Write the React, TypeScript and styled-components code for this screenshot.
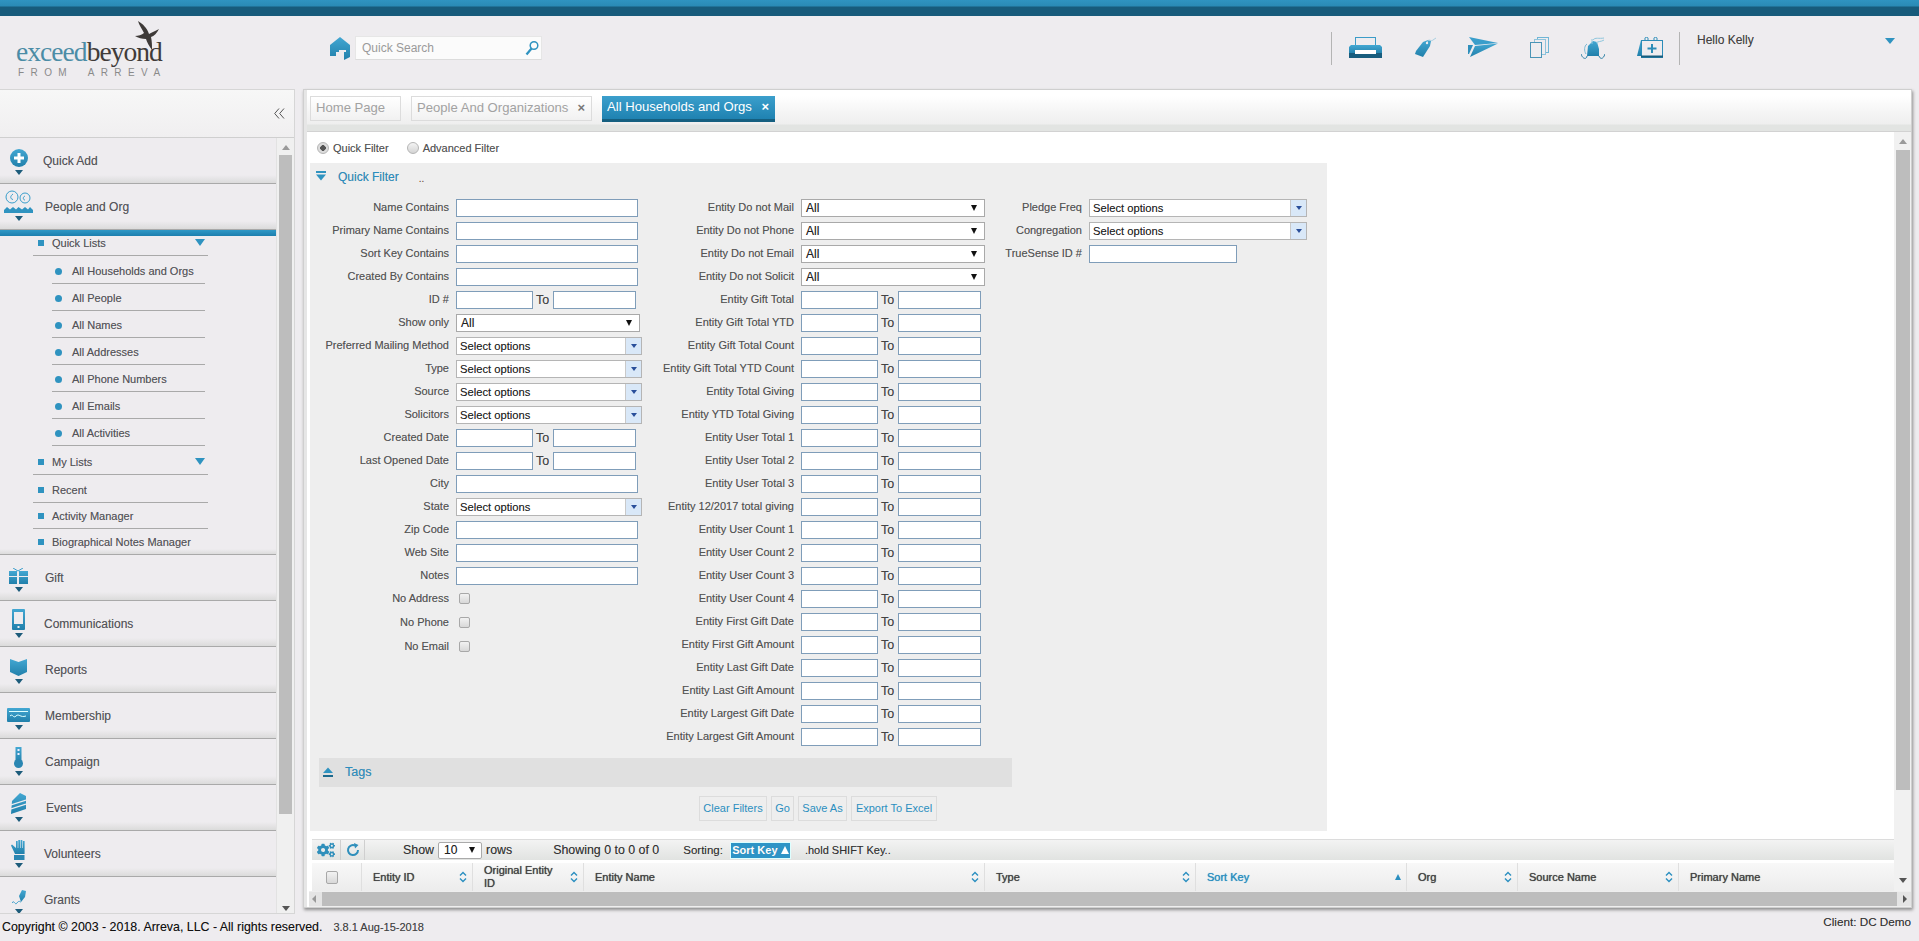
import React from 'react';
import styled, { createGlobalStyle } from 'styled-components';
import { FaCogs } from 'react-icons/fa';

const Global = createGlobalStyle`
  html, body { margin: 0; padding: 0; background: #eeecef; }
  body { font-family: "Liberation Sans", Arial, sans-serif; font-size: 12px; color: #555; overflow: hidden; text-shadow: 0 0 .6px rgba(70,70,70,.45); }
  * { box-sizing: border-box; }
`;

const Page = styled.div`width: 1919px; height: 941px; overflow: hidden; display: flex; flex-direction: column; background: #eeecef; position: relative;`;
const TopBar = styled.div`height: 16px; flex: none; background: linear-gradient(#2f93c0 0, #2a8ab5 6px, #175b7b 7px, #175b7b 100%);`;
const Header = styled.header`height: 73px; flex: none; display: flex; align-items: flex-start;`;
const Logo = styled.div`width: 314px; margin-left: 16px; padding-top: 21px; position: relative; flex: none;`;
const LogoWord = styled.div`font-family: "Liberation Serif", serif; font-size: 27.5px; line-height: 30px; letter-spacing: -.95px; color: #4b8ca6; white-space: nowrap; text-shadow: none;`;
const LogoDark = styled.span`color: #403b39;`;
const LogoSub = styled.div`font-size: 10px; line-height: 12px; letter-spacing: 6.4px; word-spacing: 6px; color: #8a8a8a; margin: 0 0 0 2px; white-space: nowrap; text-shadow: none;`;
const BirdMark = styled.svg`position: absolute; left: 119px; top: 5px;`;
const HomeMark = styled.svg`flex: none; margin: 21px 5px 0 0;`;
const SearchBox = styled.div`width: 187px; height: 24px; margin-top: 20px; background: #fbfbfb; border: 1px solid #e6e6e6; border-bottom-color: #dcdcdc; display: flex; align-items: center; padding: 0 1px 0 4px;`;
const SearchInput = styled.input`flex: 1; min-width: 0; border: 0; background: transparent; outline: 0; font: 12px "Liberation Sans", Arial, sans-serif; color: #888; &::placeholder { color: #9a9a9a; opacity: 1; }`;
const Tools = styled.div`margin-left: auto; width: 588px; height: 33px; margin-top: 16px; display: flex; align-items: flex-start;`;
const ToolGroup = styled.div`display: flex; gap: 32px; height: 33px; align-items: flex-start; padding: 5px 16px 0 17px; border-left: 1px solid #b4b4b4; border-right: 1px solid #b4b4b4;`;
const Hello = styled.div`padding: 0 0 0 17px; flex: 1; color: #444; font-size: 12px; line-height: 16px;`;
const HelloCaret = styled.div`width: 0; height: 0; margin: 6px 24px 0 0; border-left: 5px solid transparent; border-right: 5px solid transparent; border-top: 6px solid #2f93c0;`;

const Body = styled.div`height: 825px; flex: none; display: flex; align-items: flex-start;`;
const Side = styled.aside`width: 295px; height: 825px; flex: none; border: 1px solid #d6d6d6; border-left: 0; display: flex; flex-direction: column; background: #eeecef;`;
const SideHead = styled.div`height: 48px; flex: none; background: linear-gradient(#f7f7f7, #f0eff0); display: flex; justify-content: flex-end; align-items: center; padding: 0 9px 0 0; border-bottom: 1px solid #cfcfcf;`;
const SideBody = styled.div`flex: 1; min-height: 0; display: flex;`;
const NavCol = styled.nav`width: 277px; flex: none; overflow: hidden; border-right: 1px solid #e2e2e2;`;
const VScrollSide = styled.div`width: 17px; flex: none; background: #f0f0f0; display: flex; flex-direction: column; align-items: center; padding-top: 7px;`;
const ArrowUp = styled.div`width: 0; height: 0; flex: none; border-left: 4px solid transparent; border-right: 4px solid transparent; border-bottom: 5px solid #9a9a9a;`;
const ArrowDown = styled.div`width: 0; height: 0; flex: none; border-left: 4px solid transparent; border-right: 4px solid transparent; border-top: 5px solid #555;`;
const ArrowLeft = styled.div`width: 0; height: 0; border-top: 4px solid transparent; border-bottom: 4px solid transparent; border-right: 4px solid #999;`;
const ArrowRight = styled.div`width: 0; height: 0; border-top: 4px solid transparent; border-bottom: 4px solid transparent; border-left: 4px solid #555;`;
const SideThumb = styled.div`width: 13px; height: 659px; flex: none; margin: 5px 0 92px; background: #bdbdbd;`;

const NavRow = styled.div`height: 46px; display: flex; align-items: stretch; background: linear-gradient(#eeecef 0, #eeecef 37px, #dbdbdb 45px); border-bottom: 1px solid #a9a9a9; overflow: hidden;`;
const NavIconCol = styled.div`width: 37px; flex: none; display: flex; flex-direction: column; align-items: center; justify-content: flex-end; padding-bottom: 8px; gap: 3px;`;
const NavTri = styled.div`width: 0; height: 0; border-left: 4px solid transparent; border-right: 4px solid transparent; border-top: 5px solid #1d5c7b; flex: none;`;
const NavLabel = styled.div<{ $left: number }>`margin-left: ${p => p.$left}px; align-self: center; font-size: 12px; color: #55555a;`;
const NavActiveBar = styled.div`height: 6px; background: linear-gradient(#2f98c6, #1c7fae);`;
const SubList = styled.div`height: 313px; overflow: hidden;`;
const NavShade = styled.div`height: 6px; background: linear-gradient(#eeecef, #dcdcdc); border-bottom: 1px solid #a9a9a9;`;
const TopItem = styled.div<{ $h: number; $pt: number; $noline?: boolean }>`height: ${p => p.$h}px; padding: ${p => p.$pt}px 3px 0 5px; margin-left: 33px; width: 175px; display: flex; align-items: flex-start; font-size: 11px; line-height: 14px; color: #55555a; border-bottom: ${p => p.$noline ? '0' : '1px solid #a9a9a9'};`;
const Square = styled.span`width: 6px; height: 6px; background: #2f93c0; margin: 4px 8px 0 0; flex: none;`;
const SubItem = styled.div<{ $h: number; $pt: number }>`height: ${p => p.$h}px; padding: ${p => p.$pt}px 0 0 3px; margin-left: 52px; width: 153px; display: flex; align-items: flex-start; font-size: 11px; line-height: 14px; color: #55555a; border-bottom: 1px solid #a9a9a9;`;
const Dot = styled.span`width: 7px; height: 7px; border-radius: 50%; background: #2f93c0; margin: 4px 10px 0 0; flex: none;`;
const ItemCaret = styled.span`width: 0; height: 0; margin: 3px 0 0 auto; border-left: 5px solid transparent; border-right: 5px solid transparent; border-top: 7px solid #2f93c0;`;

const Main = styled.main`width: 1609px; height: 819px; margin-left: 8px; flex: none; background: #fff; border: 1px solid #cfcfcf; box-shadow: 1px 2px 3px #8f8f8f, inset 3px 0 0 #e6e6e6; display: flex; flex-direction: column; padding-left: 3px;`;
const TabBar = styled.div`height: 42px; flex: none; padding: 6px 0 0 3px; display: flex; gap: 10px; align-items: flex-start; background: linear-gradient(#fff 0, #fff 6px, #f5f5f5 22px, #efefef 34px, #e2e4e2 35px, #e2e4e2 41px); border-bottom: 1px solid #d2d2d2;`;
const Tab = styled.div<{ $w: number; $active?: boolean }>`width: ${p => p.$w}px; height: ${p => p.$active ? 26 : 25}px; display: flex; align-items: flex-start; padding: 3px 6px 0 5px; font-size: 13.1px; line-height: 16px; white-space: nowrap; text-shadow: none; color: ${p => p.$active ? '#fff' : '#a2a2a2'}; background: ${p => p.$active ? 'linear-gradient(#3b9fcc, #1f82b1)' : 'linear-gradient(#fff, #f1f1f1)'}; border: ${p => p.$active ? '0' : '1px solid #dcdcdc'}; border-bottom: ${p => p.$active ? '3px solid #155f80' : '1px solid #dcdcdc'};`;
const TabClose = styled.span<{ $active?: boolean }>`margin-left: auto; font-weight: bold; font-size: 13px; color: ${p => p.$active ? '#fff' : '#777'};`;

const ContentRow = styled.div`height: 759px; flex: none; display: flex;`;
const Scroller = styled.div`flex: 1; min-width: 0; overflow: hidden; padding-left: 2px;`;
const VScroll = styled.div`width: 17px; flex: none; background: #f1f1f1; display: flex; flex-direction: column; align-items: center; padding-top: 7px;`;
const MainThumb = styled.div`width: 14px; height: 640px; flex: none; margin: 6px 0 88px; background: #bdbdbd;`;
const HScroll = styled.div`height: 16px; flex: none; margin-left: 2px; background: #e4e4e4; display: flex; align-items: center; padding: 0 4px 0 3px; gap: 6px; border-top: 1px solid #eee; border-bottom: 1px solid #eee;`;
const HThumb = styled.div`flex: 1; height: 14px; background: #bdbdbd;`;

const RadioRow = styled.div`height: 31px; display: flex; align-items: center; padding-left: 8px;`;
const Radio = styled.span<{ $on?: boolean }>`width: 12px; height: 12px; border-radius: 50%; flex: none; margin-right: 4px; border: 1px solid #b5b5b5; background: ${p => p.$on ? 'radial-gradient(circle, #555 0, #555 2.6px, #dcdcdc 3px)' : 'linear-gradient(#f4f4f4, #d4d4d4)'};`;
const RadioLabel = styled.span<{ $mr?: number }>`font-size: 11px; color: #555; margin-right: ${p => p.$mr || 0}px;`;

const Filter = styled.section`width: 1017px; height: 668px; margin-left: 1px; background: #eee;`;
const FilterHead = styled.div`height: 36px; display: flex; align-items: flex-start; padding: 7px 0 0 6px;`;
const HeadIconBar = styled.svg`flex: none; margin: 1px 12px 0 0;`;
const FilterTitle = styled.div`font-size: 12px; line-height: 15px; color: #2b8fc0;`;
const Dots = styled.div`margin: 3px 0 0 20px; color: #7a5a40; font-size: 10px;`;
const FormCols = styled.div`display: flex; height: 552px;`;
const Col = styled.div<{ $w: number }>`width: ${p => p.$w}px; flex: none;`;
const Row = styled.div<{ $lw: number; $h?: number }>`height: ${p => p.$h || 23}px; display: grid; grid-template-columns: ${p => p.$lw}px 1fr; column-gap: 7px; align-items: start;`;
const Label = styled.label`text-align: right; font-size: 11px; line-height: 16px; color: #555; white-space: nowrap;`;
const TextInput = styled.input<{ $w: number }>`display: block; width: ${p => p.$w}px; height: 18px; border: 1px solid #7f9db9; background: #fff; padding: 0 2px; outline: 0;`;
const Pair = styled.div`display: flex; align-items: flex-start;`;
const To = styled.span`font-size: 12.5px; line-height: 18px; color: #444; width: 20px; text-align: left; padding-left: 3px;`;
const SelectBox = styled.div<{ $w: number }>`width: ${p => p.$w}px; height: 18px; border: 1px solid #a9a9a9; background: #fff; display: flex; align-items: center; padding: 0 7px 0 4px; font-size: 12px; color: #222; justify-content: space-between;`;
const SelectCaret = styled.span`width: 0; height: 0; border-left: 3px solid transparent; border-right: 3px solid transparent; border-top: 6px solid #111;`;
const MultiBox = styled.div<{ $w: number }>`width: ${p => p.$w}px; height: 18px; border: 1px solid #b5b5b5; background: #fff; display: flex; align-items: center; font-size: 11.2px; color: #222;`;
const MultiText = styled.span`flex: 1; padding-left: 3px;`;
const MultiBtn = styled.span`width: 16px; height: 16px; background: #d9e8f8; border-left: 1px solid #c9c9c9; display: flex; align-items: center; justify-content: center;`;
const MultiTri = styled.span`width: 0; height: 0; border-left: 3.5px solid transparent; border-right: 3.5px solid transparent; border-top: 4px solid #2a4f9a;`;
const Check = styled.span`display: block; width: 11px; height: 11px; margin: 3px 0 0 3px; border: 1px solid #a8a8a8; border-radius: 2px; background: linear-gradient(#f2f2f2, #d8d8d8);`;

const TagsBar = styled.div`margin: 7px 0 0 9px; width: 693px; height: 29px; background: #e0e0e0; display: flex; align-items: center; padding: 0 0 2px 4px;`;
const TagsTitle = styled.div`margin-left: 12px; font-size: 12.5px; color: #2b8fc0;`;
const Buttons = styled.div`display: flex; gap: 4px; margin: 9px 0 0 389px;`;
const FBtn = styled.button<{ $w: number }>`width: ${p => p.$w}px; height: 25px; padding: 0 0 1px; border: 1px solid #dcdcdc; background: #eee; color: #2b8fc0; font: 11px "Liberation Sans", Arial, sans-serif; white-space: nowrap;`;

const GridBar = styled.div`margin: 8px 0 0 3px; height: 21px; width: 1583px; display: flex; align-items: center; background: linear-gradient(#f3f3f3, #e1e3e1); border-top: 1px solid #dcdcdc;`;
const GridIconBtn = styled.div<{ $w: number }>`width: ${p => p.$w}px; height: 20px; flex: none; display: flex; align-items: center; justify-content: center; color: #2f8fbb; border-right: 1px solid #cfcfcf;`;
const GridText = styled.span<{ $ml: number; $s?: number }>`margin-left: ${p => p.$ml}px; font-size: ${p => p.$s || 12.4}px; color: #333; white-space: nowrap;`;
const RowsSelect = styled.div`margin-left: 4px; width: 44px; height: 17px; background: #fff; border: 1px solid #aaa; border-radius: 2px; display: flex; align-items: center; justify-content: space-between; padding: 0 6px 0 5px; font-size: 12px; color: #222;`;
const SortPill = styled.div`margin-left: 7px; width: 61px; height: 17px; background: #2e94c6; color: #fff; font-weight: bold; font-size: 11px; display: flex; align-items: center; justify-content: center; gap: 3px; border: 1px solid #dff; white-space: nowrap;`;
const PillTri = styled.span`width: 0; height: 0; border-left: 4px solid transparent; border-right: 4px solid transparent; border-bottom: 8px solid #fff;`;
const GridHead = styled.div`margin: 3px 0 0 3px; height: 28px; width: 1583px; display: flex; background: linear-gradient(#f8f8f8, #ececec);`;
const HeadCell = styled.div<{ $w: number; $active?: boolean }>`width: ${p => p.$w}px; flex: none; display: flex; align-items: center; padding: 0 5px 0 11px; font-size: 11px; line-height: 13px; color: ${p => p.$active ? '#2b8fc0' : '#444'}; border-right: 1px solid #dfdfdf; &:last-child { border-right: 0; }`;
const HeadText = styled.span`flex: 1; text-shadow: 0 0 .7px currentColor;`;
const GridCheck = styled.span`display: block; width: 12px; height: 13px; margin-left: 3px; border: 1px solid #a8a8a8; border-radius: 2px; background: linear-gradient(#f2f2f2, #d8d8d8);`;
const SortTriUp = styled.span`width: 0; height: 0; border-left: 3.5px solid transparent; border-right: 3.5px solid transparent; border-bottom: 6px solid #2b8fc0;`;

const Footer = styled.footer`height: 27px; flex: none; display: flex; align-items: flex-start;`;
const Copy = styled.div`margin: 5px 0 0 2px; font-size: 12.4px; line-height: 16px; color: #111;`;
const Version = styled.div`margin: 5px 0 0 11px; font-size: 11px; line-height: 16px; color: #444;`;
const Client = styled.div`margin: 0 8px 0 auto; font-size: 11.7px; line-height: 16px; color: #333;`;
const Defs = styled.svg`position: absolute; width: 0; height: 0;`;
const MagMark = styled.svg`flex: none; margin-right: 1px;`;

const B = 'url(#blueGrad)';
const Bird = () => (
  <BirdMark width="27" height="29" viewBox="0 0 27 29"><path fill="#3e3a38" d="M3 0 C8 3 12 7 14 13 C17 11 21 10 24 8 C22 12 19 15 16 16 C17 20 17 25 17 29 C14 25 12 21 11 18 C7 18 3 17 0 15 C3 15 7 14 9 12 C7 8 4 4 3 0 Z" /></BirdMark>
);
const Home = () => (
  <HomeMark width="20" height="24" viewBox="0 0 20 24"><path fill={B} d="M10 0 L20 8 V20 L14 23 V15 H6 V19 H0 V8 Z" /><path fill="#eeecef" d="M9 13 H16 V15 H11 V20 H9 Z" /></HomeMark>
);
const Mag = () => (
  <MagMark width="14" height="16" viewBox="0 0 14 16" fill="none" stroke="#2f93c0"><circle cx="9" cy="5.5" r="3.8" strokeWidth="1.5" /><path d="M6.5 8.5 L1.5 14.5" strokeWidth="2.2" /></MagMark>
);
const Collapse = () => (
  <svg width="11" height="11" viewBox="0 0 11 11" fill="none" stroke="#555"><path d="M5 .5 L.7 5.5 L5 10.5 M10 .5 L5.7 5.5 L10 10.5" /></svg>
);
const Printer = () => (
  <svg width="33" height="21" viewBox="0 0 33 21"><rect x="6.5" y=".5" width="20" height="8" fill="none" stroke="#3b9cc8" /><path fill={B} d="M2 8 H31 L33 10 V17 H0 V10 Z" /><rect y="16" width="33" height="5" fill="#185d7e" /><rect x="6" y="13" width="21" height="4" fill="#fff" /></svg>
);
const TagIcon = () => (
  <svg width="22" height="21" viewBox="0 0 22 21"><path fill={B} d="M9 5 L14 3 L17 4 L16 9 L9 20 L1 17 L2 14 Z" /><circle cx="13" cy="6" r="1.2" fill="#eeecef" /><path d="M13 5 C15 1 17 5 19 3 L22 1" stroke="#a9cfe0" fill="none" /></svg>
);
const Plane = () => (
  <svg width="30" height="20" viewBox="0 0 30 20"><path fill="#3a9ecb" d="M1 0 L30 6 L7 8 Z" /><path fill={B} d="M30 6.5 L2 20 L7 9 Z" /><path fill="#2f8fbb" d="M0 8 H5 L1 17 H0 Z" /></svg>
);
const CopyIcon = () => (
  <svg width="19" height="21" viewBox="0 0 19 21" fill="none"><rect x="7.5" y=".5" width="11" height="15" stroke="#6fb6d6" /><rect x="4.5" y="2.5" width="11" height="15" stroke="#8fc4dc" fill="#eeecef" /><rect x=".5" y="5.5" width="11" height="15" stroke="#4a94b6" fill="#eeecef" /></svg>
);
const Bell = () => (
  <svg width="24" height="23" viewBox="0 0 24 23" fill="none"><path d="M6 7 C3 9 3 14 5 17" stroke="#7cb9d4" /><path fill={B} d="M7 9 L12 4 L16 5 L18 12 L18 19 H6 Z" /><path d="M0 17 C2 23 6 22 6 19 M18 19 C19 22 22 23 24 17" stroke="#2a7ea4" /><path d="M12 3 C14 0 18 2 23 1 M15 6 C17 4 20 5 23 3 M11 2 L11 7" stroke="#8fc6dd" /></svg>
);
const Cal = () => (
  <svg width="26" height="21" viewBox="0 0 26 21"><path fill={B} d="M4 3 H10 V19 H0 Z" /><rect x="4.5" y="3.5" width="21" height="17" fill="#eeecef" stroke="#2b8cb8" /><rect x="4" y="18.5" width="22" height="2" fill="#185d7e" /><path d="M8 4 V1 C8 0 11 0 11 1 V4 M17 4 V1 C17 0 20 0 20 1 V4" stroke="#2b8cb8" fill="none" /><path d="M15 7 V16 M10.5 11.5 H19.5" stroke="#2b8cb8" strokeWidth="2" /></svg>
);
const NIPlus = () => (<svg width="18" height="18" viewBox="0 0 18 18"><circle cx="9" cy="9" r="9" fill={B} /><path d="M9 4 V14 M4 9 H14" stroke="#fff" strokeWidth="3" /></svg>);
const NIPeople = () => (
  <svg width="29" height="23" viewBox="0 0 29 23" fill="none"><circle cx="8" cy="7" r="6" stroke="#3a9ecb" /><circle cx="21" cy="8" r="5" stroke="#3a9ecb" /><path d="M9 4 C6 6 6 9 9 9.5 M21 6 C18.5 7 19 10 21 10" stroke="#3a9ecb" /><path fill="#2f93c0" d="M0 23 V20 L3 17 L6 19.5 L9 17 L12 19.5 L14.5 17 L18 19.5 L21 17 L24 19.5 L26 17 L29 20 V23 Z" /></svg>
);
const NIGift = () => (<svg width="19" height="16" viewBox="0 0 19 16"><path fill={B} d="M0 3 H8 V8 H0 Z M10 3 H19 V8 H10 Z M0 9 H8 V16 H0 Z M10 9 H19 V16 H10 Z" /><path d="M9 3 L4 0 M9 3 L14 0" stroke="#3a9ecb" /></svg>);
const NIPhone = () => (<svg width="13" height="21" viewBox="0 0 13 21"><rect width="13" height="21" rx="1" fill={B} /><rect x="2" y="3" width="9" height="12" fill="#eeecef" /><rect x="5.5" y="17" width="2" height="2" fill="#eeecef" /></svg>);
const NIBook = () => (<svg width="17" height="17" viewBox="0 0 17 17"><path fill={B} d="M0 0 L8.5 3 L17 0 V13 L8.5 17 L0 13 Z" /></svg>);
const NICard = () => (<svg width="23" height="14" viewBox="0 0 23 14"><rect width="23" height="14" rx="1" fill={B} /><rect x="2" y="3" width="19" height="1" fill="#dff" /><path d="M3 8 C6 5 6 11 9 8 S13 10 19 8" stroke="#dff" fill="none" /></svg>);
const NITherm = () => (<svg width="9" height="21" viewBox="0 0 9 21"><rect x="1.5" width="6" height="16" fill={B} /><circle cx="4.5" cy="16.5" r="4.5" fill="#2a86b2" /><rect x="3.5" y="2" width="2" height="2" fill="#eef" /><rect x="3.5" y="6" width="2" height="2" fill="#eef" /></svg>);
const NICake = () => (<svg width="15" height="21" viewBox="0 0 15 21"><path fill={B} d="M1 8 L9 0 L15 3 V16 L0 21 Z" /><path d="M0 12 L15 7 M0 16 L15 11" stroke="#eeecef" strokeWidth="1.3" /></svg>);
const NIHand = () => (<svg width="15" height="20" viewBox="0 0 15 20"><path fill={B} d="M5 1 H6.7 V8 H5 Z M7.3 0 H9 V8 H7.3 Z M9.6 0 H11.3 V8 H9.6 Z M11.9 1 H13.6 V8 H11.9 Z M5 8 H13.6 V14 H4 L0 5.5 L1 4.5 L5 8 Z" /><rect x="3" y="15" width="10.5" height="5" fill="#2a86b2" /></svg>);
const NIPen = () => (<svg width="14" height="16" viewBox="0 0 14 16" fill="none"><path fill={B} d="M10 0 L14 1 L13 7 L9 12 L7 6 Z" /><path d="M0 13 C2 9 3 16 5 13 S8 12 9 12" stroke="#3a9ecb" /></svg>);

const NavItem = ({ icon, label, left }: { icon: React.ReactNode; label: string; left: number }) => (
  <NavRow><NavIconCol>{icon}<NavTri /></NavIconCol><NavLabel $left={left}>{label}</NavLabel></NavRow>
);

const Txt = ({ w }: { w: number }) => <TextInput $w={w} />;
const Range = ({ a, b }: { a: number; b: number }) => <Pair><TextInput $w={a} /><To>To</To><TextInput $w={b} /></Pair>;
const Sel = ({ w }: { w: number }) => <SelectBox $w={w}>All<SelectCaret /></SelectBox>;
const Multi = ({ w }: { w: number }) => <MultiBox $w={w}><MultiText>Select options</MultiText><MultiBtn><MultiTri /></MultiBtn></MultiBox>;

const col1: [string, React.ReactNode, number?][] = [
  ['Name Contains', <Txt w={182} />], ['Primary Name Contains', <Txt w={182} />], ['Sort Key Contains', <Txt w={182} />], ['Created By Contains', <Txt w={182} />],
  ['ID #', <Range a={77} b={83} />], ['Show only', <Sel w={184} />], ['Preferred Mailing Method', <Multi w={186} />], ['Type', <Multi w={186} />], ['Source', <Multi w={186} />], ['Solicitors', <Multi w={186} />],
  ['Created Date', <Range a={77} b={83} />], ['Last Opened Date', <Range a={77} b={83} />], ['City', <Txt w={182} />], ['State', <Multi w={186} />], ['Zip Code', <Txt w={182} />], ['Web Site', <Txt w={182} />], ['Notes', <Txt w={182} />],
  ['No Address', <Check />, 24], ['No Phone', <Check />, 24], ['No Email', <Check />, 24],
];
const col2Ranges = ['Entity Gift Total', 'Entity Gift Total YTD', 'Entity Gift Total Count', 'Entity Gift Total YTD Count', 'Entity Total Giving', 'Entity YTD Total Giving', 'Entity User Total 1', 'Entity User Total 2', 'Entity User Total 3', 'Entity 12/2017 total giving', 'Entity User Count 1', 'Entity User Count 2', 'Entity User Count 3', 'Entity User Count 4', 'Entity First Gift Date', 'Entity First Gift Amount', 'Entity Last Gift Date', 'Entity Last Gift Amount', 'Entity Largest Gift Date', 'Entity Largest Gift Amount'];
const updown = (
  <svg width="8" height="12" viewBox="0 0 8 12" fill="none" stroke="#2b8fc0" strokeWidth="1.4"><path d="M1 4.5 L4 1.5 L7 4.5 M1 7.5 L4 10.5 L7 7.5" /></svg>
);

export default function App() {
  return (
    <Page>
      <Global />
      <Defs><defs><linearGradient id="blueGrad" x1="0" y1="0" x2="0" y2="1"><stop offset="0" stopColor="#43a7d2" /><stop offset="1" stopColor="#2180ab" /></linearGradient></defs></Defs>
      <TopBar />
      <Header>
        <Logo>
          <Bird />
          <LogoWord>exceed<LogoDark>beyond</LogoDark></LogoWord>
          <LogoSub>FROM ARREVA</LogoSub>
        </Logo>
        <Home />
        <SearchBox><SearchInput placeholder="Quick Search" /><Mag /></SearchBox>
        <Tools>
          <ToolGroup><Printer /><TagIcon /><Plane /><CopyIcon /><Bell /><Cal /></ToolGroup>
          <Hello>Hello Kelly</Hello>
          <HelloCaret />
        </Tools>
      </Header>
      <Body>
        <Side>
          <SideHead><Collapse /></SideHead>
          <SideBody>
            <NavCol>
              <NavItem icon={<NIPlus />} label="Quick Add" left={6} />
              <NavItem icon={<NIPeople />} label="People and Org" left={8} />
              <NavActiveBar />
              <SubList>
                <TopItem $h={20} $pt={0}><Square />Quick Lists<ItemCaret /></TopItem>
                <SubItem $h={28} $pt={8}><Dot />All Households and Orgs</SubItem>
                <SubItem $h={27} $pt={7}><Dot />All People</SubItem>
                <SubItem $h={27} $pt={7}><Dot />All Names</SubItem>
                <SubItem $h={27} $pt={7}><Dot />All Addresses</SubItem>
                <SubItem $h={27} $pt={7}><Dot />All Phone Numbers</SubItem>
                <SubItem $h={27} $pt={7}><Dot />All Emails</SubItem>
                <SubItem $h={27} $pt={7}><Dot />All Activities</SubItem>
                <TopItem $h={29} $pt={9}><Square />My Lists<ItemCaret /></TopItem>
                <TopItem $h={28} $pt={8}><Square />Recent</TopItem>
                <TopItem $h={26} $pt={6}><Square />Activity Manager</TopItem>
                <TopItem $h={22} $pt={6} $noline><Square />Biographical Notes Manager</TopItem>
              </SubList>
              <NavShade />
              <NavItem icon={<NIGift />} label="Gift" left={8} />
              <NavItem icon={<NIPhone />} label="Communications" left={7} />
              <NavItem icon={<NIBook />} label="Reports" left={8} />
              <NavItem icon={<NICard />} label="Membership" left={8} />
              <NavItem icon={<NITherm />} label="Campaign" left={8} />
              <NavItem icon={<NICake />} label="Events" left={9} />
              <NavItem icon={<NIHand />} label="Volunteers" left={7} />
              <NavItem icon={<NIPen />} label="Grants" left={7} />
            </NavCol>
            <VScrollSide>
              <ArrowUp />
              <SideThumb />
              <ArrowDown />
            </VScrollSide>
          </SideBody>
        </Side>
        <Main>
          <TabBar>
            <Tab $w={91}>Home Page</Tab>
            <Tab $w={181}>People And Organizations<TabClose>×</TabClose></Tab>
            <Tab $w={173} $active>All Households and Orgs<TabClose $active>×</TabClose></Tab>
          </TabBar>
          <ContentRow>
            <Scroller>
              <RadioRow><Radio $on /><RadioLabel $mr={18}>Quick Filter</RadioLabel><Radio /><RadioLabel>Advanced Filter</RadioLabel></RadioRow>
              <Filter>
                <FilterHead>
                  <HeadIconBar width="10" height="10" viewBox="0 0 10 10"><rect width="10" height="2" fill="#2f93c0" /><path d="M0 3.5 H10 L5 9.5 Z" fill="#2f93c0" /></HeadIconBar>
                  <FilterTitle>Quick Filter</FilterTitle><Dots>..</Dots>
                </FilterHead>
                <FormCols>
                  <Col $w={340}>
                    {col1.map(([l, c, h]) => <Row key={l} $lw={139} $h={h}><Label>{l}</Label>{c}</Row>)}
                  </Col>
                  <Col $w={340}>
                    {['Entity Do not Mail', 'Entity Do not Phone', 'Entity Do not Email', 'Entity Do not Solicit'].map(l => <Row key={l} $lw={144}><Label>{l}</Label><Sel w={184} /></Row>)}
                    {col2Ranges.map(l => <Row key={l} $lw={144}><Label>{l}</Label><Range a={77} b={83} /></Row>)}
                  </Col>
                  <Col $w={310}>
                    <Row $lw={92}><Label>Pledge Freq</Label><Multi w={218} /></Row>
                    <Row $lw={92}><Label>Congregation</Label><Multi w={218} /></Row>
                    <Row $lw={92}><Label>TrueSense ID #</Label><Txt w={148} /></Row>
                  </Col>
                </FormCols>
                <TagsBar>
                  <svg width="10" height="10" viewBox="0 0 10 10"><path d="M0 6 H10 L5 0.5 Z" fill="#2f93c0" /><rect y="8" width="10" height="2" fill="#1d6a8e" /></svg>
                  <TagsTitle>Tags</TagsTitle>
                </TagsBar>
                <Buttons>
                  <FBtn $w={68}>Clear Filters</FBtn><FBtn $w={23}>Go</FBtn><FBtn $w={49}>Save As</FBtn><FBtn $w={86}>Export To Excel</FBtn>
                </Buttons>
              </Filter>
              <GridBar>
                <GridIconBtn $w={29}><FaCogs size={18} /></GridIconBtn>
                <GridIconBtn $w={24}><svg width="14" height="14" viewBox="0 0 14 14" fill="none" stroke="#2f8fbb" strokeWidth="2"><path d="M12 7 A5 5 0 1 1 9 2.5" /><path d="M8 0 L12.5 2 L9 5.5 Z" fill="#2f8fbb" strokeWidth="0" /></svg></GridIconBtn>
                <GridText $ml={38}>Show</GridText>
                <RowsSelect>10<SelectCaret /></RowsSelect>
                <GridText $ml={4}>rows</GridText>
                <GridText $ml={41}>Showing 0 to 0 of 0</GridText>
                <GridText $ml={24} $s={11.5}>Sorting:</GridText>
                <SortPill>Sort Key<PillTri /></SortPill>
                <GridText $ml={14} $s={11}>.hold SHIFT Key..</GridText>
              </GridBar>
              <GridHead>
                <HeadCell $w={50}><GridCheck /></HeadCell>
                <HeadCell $w={111}><HeadText>Entity ID</HeadText>{updown}</HeadCell>
                <HeadCell $w={111}><HeadText>Original Entity<br />ID</HeadText>{updown}</HeadCell>
                <HeadCell $w={401}><HeadText>Entity Name</HeadText>{updown}</HeadCell>
                <HeadCell $w={211}><HeadText>Type</HeadText>{updown}</HeadCell>
                <HeadCell $w={211} $active><HeadText>Sort Key</HeadText><SortTriUp /></HeadCell>
                <HeadCell $w={111}><HeadText>Org</HeadText>{updown}</HeadCell>
                <HeadCell $w={161}><HeadText>Source Name</HeadText>{updown}</HeadCell>
                <HeadCell $w={216}><HeadText>Primary Name</HeadText></HeadCell>
              </GridHead>
            </Scroller>
            <VScroll>
              <ArrowUp />
              <MainThumb />
              <ArrowDown />
            </VScroll>
          </ContentRow>
          <HScroll><ArrowLeft /><HThumb /><ArrowRight /></HScroll>
        </Main>
      </Body>
      <Footer>
        <Copy>Copyright © 2003 - 2018. Arreva, LLC - All rights reserved.</Copy>
        <Version>3.8.1 Aug-15-2018</Version>
        <Client>Client: DC Demo</Client>
      </Footer>
    </Page>
  );
}
